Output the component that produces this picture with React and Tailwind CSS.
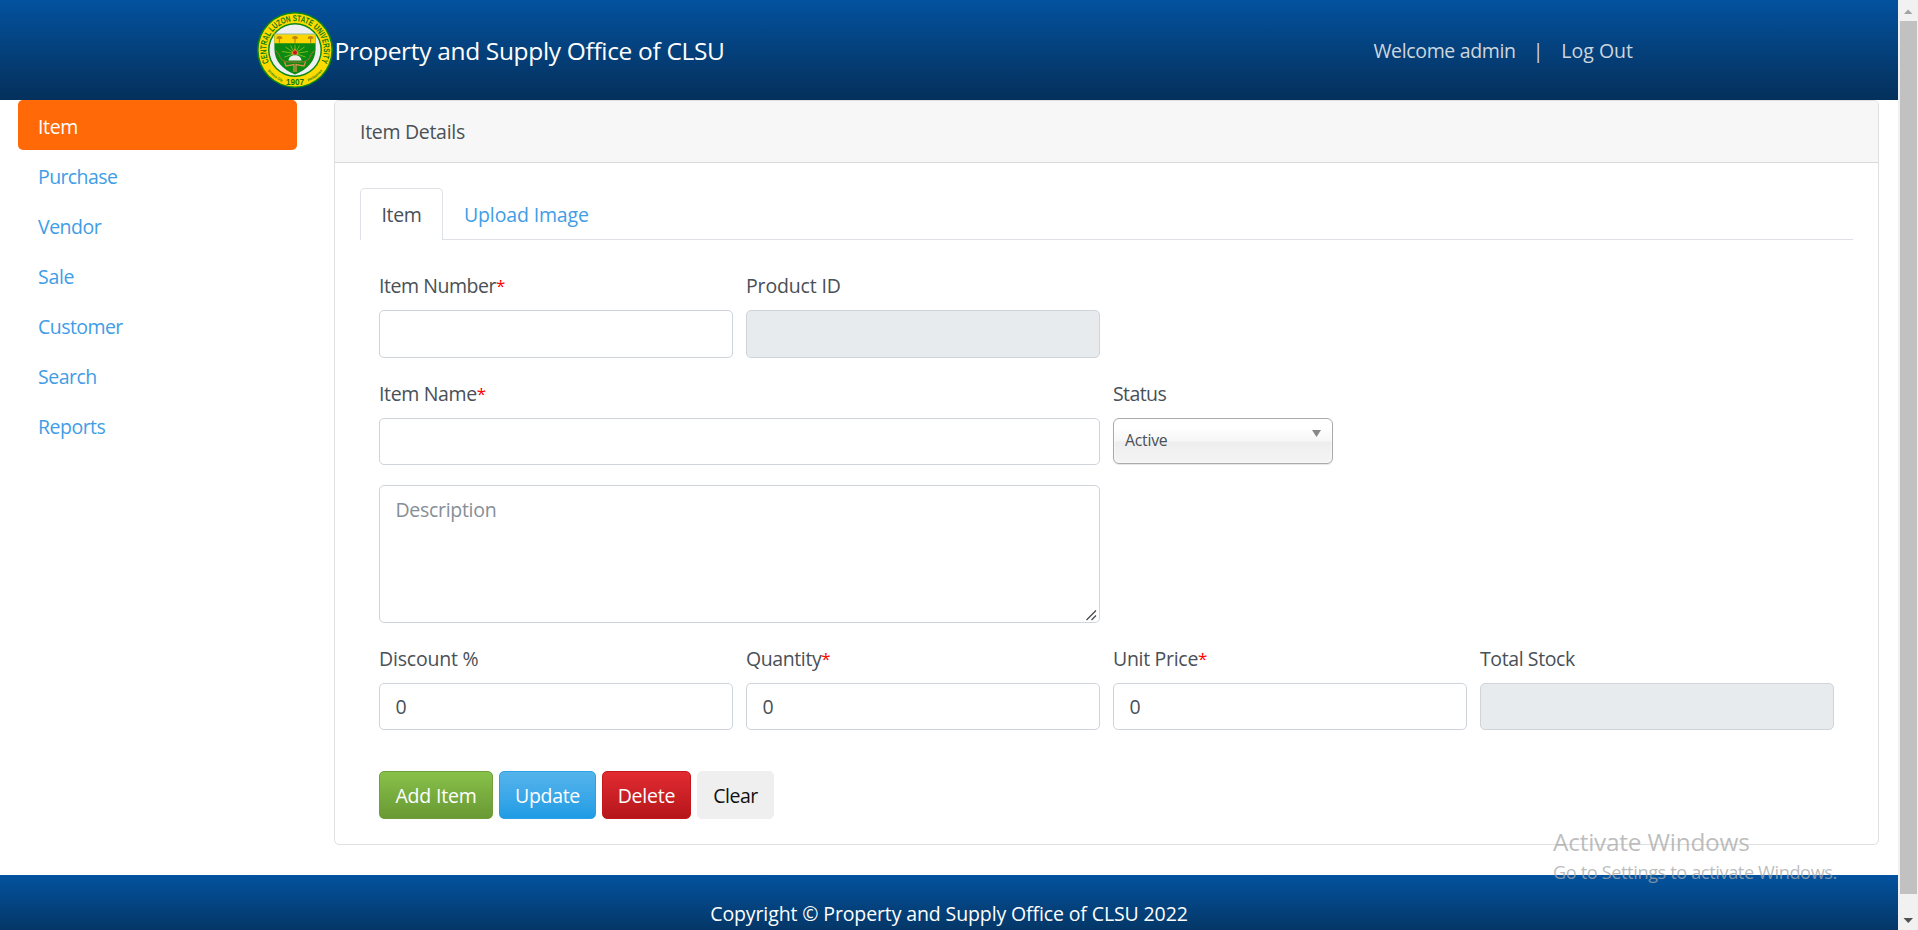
import React from "react";

const NAV = [
  { label: "Item", track: "tracking-[-0.35px]", active: true },
  { label: "Purchase", track: "tracking-[-0.6px]" },
  { label: "Vendor", track: "tracking-[-0.5px]" },
  { label: "Sale", track: "tracking-[-0.3px]" },
  { label: "Customer", track: "tracking-[-0.55px]" },
  { label: "Search", track: "tracking-[-0.5px]" },
  { label: "Reports", track: "tracking-[-0.5px]" },
];

function Seal() {
  return (
    <svg className="size-[78px] shrink-0" viewBox="-39 -39 78 78" role="img" aria-label="Central Luzon State University seal">
      <defs>
        <path id="sealTop" d="M-25.9 12.4 A28.7 28.7 0 1 1 25.9 12.4" />
        <path id="sealLower" d="M-31.4 13.5 A34.2 34.2 0 0 0 31.4 13.5" />
      </defs>
      <circle r="38" fill="#0b8a12" />
      <circle r="36.4" fill="#fedb00" />
      <circle r="27" fill="#0b8a12" />
      <circle r="25.5" fill="#efeff1" />
      <g fill="#0a7a10" fontFamily="'Liberation Sans', Arial, sans-serif" fontWeight="bold">
        <text fontSize="8.8">
          <textPath href="#sealTop" textLength="115" lengthAdjust="spacingAndGlyphs">CENTRAL LUZON STATE UNIVERSITY</textPath>
        </text>
        <text fontSize="9.2" x="-9" y="34.7" textLength="18" lengthAdjust="spacingAndGlyphs">1907</text>
        <text fontSize="3.5" fontStyle="italic">
          <textPath href="#sealLower" startOffset="8" textLength="18.5" lengthAdjust="spacingAndGlyphs">Science City</textPath>
        </text>
        <text fontSize="3.5" fontStyle="italic">
          <textPath href="#sealLower" startOffset="53.2" textLength="18" lengthAdjust="spacingAndGlyphs">Philippines</textPath>
        </text>
      </g>
      <path d="M-20.6 -16H20.6V-1C20.6 11 12 20 0 24.5C-12 20 -20.6 11 -20.6 -1Z" fill="#0b8a12" />
      <path d="M-20.6 -16H20.6V-6.7H-20.6Z" fill="#fed402" />
      <path d="M-20.6 -16H20.6" stroke="#8fc0a0" strokeWidth="1.2" />
      <g fill="#b8860b">
        <path d="M-18.6 -11.4a3 2.6 0 0 1 6 0l-2.4 .5v3.6h-1.2v-3.6z" />
        <path d="M-3 -11.4a3 2.6 0 0 1 6 0l-2.4 .5v3.6h-1.2v-3.6z" />
        <path d="M12.6 -11.4a3 2.6 0 0 1 6 0l-2.4 .5v3.6h-1.2v-3.6z" />
      </g>
      <path d="M0 3.5V-5M0 3.5L4.5 -4.5M0 3.5L-4.5 -4.5M0 3.5L9.5 -3M0 3.5L-9.5 -3M0 3.5L13 1.5M0 3.5L-13 1.5M0 3.5L10.5 7M0 3.5L-10.5 7" stroke="#a8cc20" strokeWidth="0.7" />
      <path d="M-6.5 10.5C-6 3.5 6 3.5 6.5 10.5Z" fill="#f1efe6" />
      <path d="M-3.3 4.5C-3 0 -1 1 0 -2C1 1 3 0 3.3 4.5Z" fill="#f08a24" />
      <circle cy="2.6" r="2" fill="#c4161c" />
      <path d="M-19.5 1C-15 3 -16 9 -11 11C-7 12.5 -4 12 0 12C4 12 7 12.5 11 11C16 9 15 3 19.5 1" fill="none" stroke="#a8742e" strokeWidth="1" />
      <path d="M-10.5 12L-9 16L-1 14.5V22M10.5 12L9 16L1 14.5V22" fill="none" stroke="#d9904e" strokeWidth="1.3" />
    </svg>
  );
}

function Label({ children, required }) {
  return (
    <label className="mb-[8.5px] block h-[30px] whitespace-nowrap leading-[30px]">
      {children}
      {required && <span className="align-[1px] text-[17px] leading-none text-[#f00]">*</span>}
    </label>
  );
}

const INPUT =
  "block w-full rounded-[5px] border border-[#ced4da] px-[15.5px] pt-[1px] text-[#495057] outline-none";

function Field({ label, track, required, value, disabled, span = "col-span-1", height = "h-[47px]" }) {
  return (
    <div className={span}>
      <Label required={required}>
        <span className={track}>{label}</span>
      </Label>
      <input
        className={`${INPUT} ${height} ${disabled ? "bg-[#e7ebee]" : "bg-white"}`}
        defaultValue={value}
        disabled={disabled}
      />
    </div>
  );
}

function Button({ children, className }) {
  return (
    <button className={`h-12 rounded-[5px] border pt-[3px] text-center whitespace-nowrap ${className}`}>{children}</button>
  );
}

function Scrollbar() {
  return (
    <div className="flex h-[930px] w-5 shrink-0 flex-col items-end bg-[#f1f1f1]">
      <svg className="h-[21px] w-5 shrink-0" viewBox="0 0 20 21">
        <path d="M6 14L10 9.5L14.5 14Z" fill="#a3a3a3" />
      </svg>
      <div className="mr-[1px] h-[873px] w-[17px] bg-[#c1c1c1]" />
      <svg className="h-9 w-5 shrink-0" viewBox="0 0 20 36">
        <path d="M5.5 24H15L10.3 29Z" fill="#505050" />
      </svg>
    </div>
  );
}

export default function App() {
  return (
    <div className="relative flex h-[930px] overflow-hidden bg-white font-['Open_Sans',sans-serif] text-[19.5px] leading-[30px] text-[#495057]">
      <div className="flex min-w-0 flex-1 flex-col">
        <header className="flex h-[100px] shrink-0 items-center justify-between bg-linear-to-b from-[#03529f] to-[#04305b] pr-[265px] pl-64">
          <div className="flex items-center text-[24.5px] text-white">
            <Seal />
            <span className="pt-[1px] pl-[0.5px] tracking-[-0.33px]">Property and Supply Office of CLSU</span>
          </div>
          <nav className="flex items-center pt-[2px] whitespace-nowrap text-[#cdd6df]">
            <span className="tracking-[-0.35px]">Welcome admin</span>
            <span className="mr-[18px] ml-[17px]">|</span>
            <span>Log Out</span>
          </nav>
        </header>

        <main className="flex h-[775px] shrink-0">
          <nav className="flex w-[297px] shrink-0 flex-col pl-[18px]">
            {NAV.map((item) => (
              <a
                key={item.label}
                className={`flex h-[50px] items-center rounded-[5px] pt-[3px] pl-5 ${item.track} ${
                  item.active ? "bg-[#ff6908] text-white" : "text-[#409de6]"
                }`}
              >
                {item.label}
              </a>
            ))}
          </nav>

          <section className="ml-[37px] flex h-[745px] w-[1545px] flex-col rounded-[5px] border border-[#dfdfdf]">
            <h2 className="h-[62px] rounded-t-[4px] border-b border-[#d9d9d9] bg-[#f7f7f7] px-[25px] pt-4 tracking-[-0.3px]">
              Item Details
            </h2>
            <div className="flex flex-col px-[25px] pt-[25px]">
              <div className="flex h-[52px] border-b border-[#dee2e6]">
                <a className="h-[52px] w-[83px] rounded-t-[5px] border border-b-0 border-[#dee2e6] bg-white pt-[11px] text-center tracking-[-0.3px]">
                  Item
                </a>
                <a className="pt-3 pl-[21px] tracking-[-0.14px] text-[#409de6]">Upload Image</a>
              </div>

              <form className="mt-[31px] box-content flex w-[1455px] flex-col px-[19px]">
                <div className="grid grid-cols-4 gap-x-[13px]">
                  <Field label="Item Number" track="tracking-[-0.45px]" required height="h-12" />
                  <Field label="Product ID" track="tracking-[-0.15px]" disabled height="h-12" />
                </div>
                <div className="mt-[21.5px] grid grid-cols-4 gap-x-[13px]">
                  <Field label="Item Name" track="tracking-[-0.35px]" required span="col-span-2" />
                  <div>
                    <Label>
                      <span className="tracking-[-0.6px]">Status</span>
                    </Label>
                    <div className="flex h-[46px] w-[220px] justify-between rounded-[6px] border border-[#aaa] bg-[linear-gradient(#fff_20%,#f6f6f6_50%,#eee_52%,#f4f4f4_100%)] pr-[11px] pl-[11px] shadow-[inset_0_0_3px_#fff,0_1px_1px_rgba(0,0,0,0.1)]">
                      <span className="pt-[6px] text-[15.8px] tracking-[-0.25px]">Active</span>
                      <svg className="mt-[11px] h-[7px] w-[9px]" viewBox="0 0 9 7">
                        <path d="M0 0H9L4.5 7Z" fill="#888" />
                      </svg>
                    </div>
                  </div>
                </div>
                <div className="mt-5 grid grid-cols-4 gap-x-[13px]">
                  <div className="relative col-span-2">
                    <textarea
                      className={`${INPUT} h-[138px] resize-none bg-white pt-[9px] tracking-[-0.3px] placeholder:text-[#868e96]`}
                      placeholder="Description"
                    />
                    <svg className="absolute right-[3px] bottom-[2px] size-3" viewBox="0 0 12 12">
                      <path d="M1.5 11L11 1.5M6.5 11L11 6.5" fill="none" stroke="#4a4a4a" strokeWidth="1.3" />
                    </svg>
                  </div>
                </div>
                <div className="mt-[21.5px] grid grid-cols-4 gap-x-[13px]">
                  <Field label="Discount %" track="tracking-[-0.2px]" value="0" />
                  <Field label="Quantity" track="tracking-[-0.4px]" required value="0" />
                  <Field label="Unit Price" track="tracking-[-0.3px]" required value="0" />
                  <Field label="Total Stock" track="tracking-[-0.4px]" disabled />
                </div>
                <div className="mt-[41px] flex">
                  <Button className="mr-1.5 w-[114px] border-[#6f9f36] bg-linear-to-b from-[#88c149] to-[#699934] tracking-[-0.2px] text-white">
                    Add Item
                  </Button>
                  <Button className="mr-1.5 w-[97px] border-[#2d9fe4] bg-linear-to-b from-[#54b4eb] to-[#1d9ce5] tracking-[-0.3px] text-white">
                    Update
                  </Button>
                  <Button className="mr-1.5 w-[89px] border-[#c3171d] bg-linear-to-b from-[#e12b31] to-[#b5161b] tracking-[-0.2px] text-white">
                    Delete
                  </Button>
                  <Button className="w-[77px] border-[#efefef] bg-[#efefef] tracking-[-0.45px] text-[#111]">Clear</Button>
                </div>
              </form>
            </div>
          </section>
        </main>

        <footer className="h-[55px] shrink-0 bg-linear-to-b from-[#03529f] to-[#043767] pt-6 text-center tracking-[-0.12px] text-white">
          Copyright © Property and Supply Office of CLSU 2022
        </footer>
      </div>

      <Scrollbar />

      <div className="pointer-events-none absolute top-[824px] left-[1553px] whitespace-nowrap text-[#a8a8a8]/75">
        <div className="h-[33px] text-[24.4px] leading-9 tracking-[-0.22px]">Activate Windows</div>
        <div className="text-[18.2px] leading-[30px] tracking-[-0.4px]">Go to Settings to activate Windows.</div>
      </div>
    </div>
  );
}
